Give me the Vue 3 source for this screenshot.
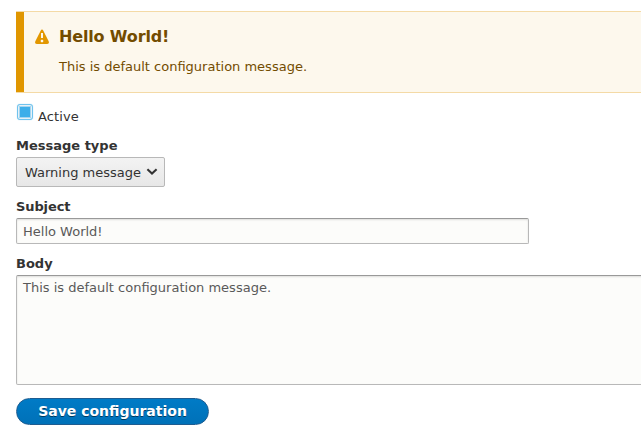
<script setup>
import { ref } from 'vue'

const active = ref(true)
const messageType = ref('Warning message')
const subject = ref('Hello World!')
const body = ref('This is default configuration message.')
</script>

<template>
  <main class="page">
    <section class="message" role="status">
      <svg class="message-icon" viewBox="0 0 16 16" aria-hidden="true">
        <path
          fill="#e29700"
          d="M14.66 12.316l-5.316-10.633c-.738-1.476-1.946-1.476-2.685 0l-5.317 10.633c-.738 1.477.008 2.684 1.658 2.684h10.002c1.65 0 2.396-1.207 1.658-2.684zm-7.66-8.316h2.002v5h-2.002v-5zm2.252 8.615c0 .344-.281.625-.625.625h-1.25c-.345 0-.626-.281-.626-.625v-1.239c0-.344.281-.625.626-.625h1.25c.344 0 .625.281.625.625v1.239z"
        />
      </svg>
      <div>
        <h2 class="message-title">{{ subject }}</h2>
        <p class="message-text">{{ body }}</p>
      </div>
    </section>

    <form class="form" @submit.prevent>
      <label class="check">
        <input v-model="active" class="check-box" type="checkbox" />
        <span class="check-text">Active</span>
      </label>

      <label class="label" for="type">Message type</label>
      <button id="type" class="select" type="button">
        <span>{{ messageType }}</span>
        <svg class="chevron" viewBox="0 0 12 8" aria-hidden="true">
          <path d="M1.4 1.3L6 5.5L10.6 1.3" fill="none" stroke="#333" stroke-width="2.1" />
        </svg>
      </button>

      <label class="label label-subject" for="subject">Subject</label>
      <input id="subject" v-model="subject" class="field subject" type="text" />

      <label class="label label-body" for="body">Body</label>
      <textarea id="body" v-model="body" class="field body" spellcheck="false"></textarea>

      <button class="save" type="submit">Save configuration</button>
    </form>
  </main>
</template>

<style>
body {
  background: #fff;
}
</style>

<style scoped>
.page {
  box-sizing: border-box;
  padding: 11px 0 0 16px;
  overflow: hidden;
  font-family: "DejaVu Sans", sans-serif;
  font-size: 13px;
  color: #333;
}

.message {
  box-sizing: border-box;
  display: flex;
  gap: 9px;
  height: 82px;
  padding: 14px 0 0 18px;
  border: solid #f4daa6;
  border-width: 1px 0;
  background: #fdf8ed;
  box-shadow: inset 8px 0 #e09600;
  color: #734c00;
}

.message-icon {
  width: 16px;
  height: 16px;
  margin-top: 3px;
}

.message-title {
  margin: 0;
  font-size: 16px;
  line-height: 21px;
  font-weight: bold;
  letter-spacing: -0.15px;
}

.message-text {
  margin: 10px 0 0;
  line-height: 20px;
}

.form {
  display: flex;
  flex-direction: column;
  align-items: flex-start;
}

.check {
  display: flex;
  gap: 5px;
  height: 33px;
  margin-top: 10px;
}

.check-box {
  appearance: none;
  box-sizing: border-box;
  display: grid;
  place-items: center;
  width: 16px;
  height: 16px;
  margin: 1px 0 0 1px;
  border: 1px solid #6fc3ee;
  border-radius: 3px;
  background: #e6f1f7;
  box-shadow: 0 0 1px #8fcdee;
}

.check-box:checked::before {
  content: "";
  width: 12px;
  height: 12px;
  border: 1px solid #a5d6f0;
  box-sizing: border-box;
  background: #3daee9;
}

.check-text {
  line-height: 20px;
  margin-top: 4px;
  letter-spacing: 0.1px;
}

.label {
  font-weight: bold;
  line-height: 20px;
}

.select {
  box-sizing: border-box;
  display: flex;
  align-items: center;
  gap: 5px;
  width: 149px;
  height: 30px;
  margin: 1px 0 0;
  padding: 0 0 0 8px;
  border: 1px solid #b8b8b8;
  border-radius: 2px;
  background: linear-gradient(#f3f3f3, #e7e7e7);
  color: #333;
  font: inherit;
  white-space: nowrap;
}

.chevron {
  flex: none;
  width: 12px;
  height: 8px;
}

.label-subject {
  margin-top: 10px;
  letter-spacing: -0.1px;
}

.field {
  box-sizing: border-box;
  margin: 1px 0 0;
  border: 1px solid #b8b8b8;
  border-top-color: #999;
  border-radius: 2px;
  background: #fcfcfa;
  box-shadow: inset 0 1px 2px rgba(0, 0, 0, 0.125);
  color: #595959;
  font: inherit;
  outline: none;
}

.subject {
  width: 513px;
  height: 26px;
  padding: 0 6px;
}

.label-body {
  margin-top: 10px;
}

.body {
  width: calc(100% + 16px);
  height: 110px;
  padding: 4px 6px;
  resize: none;
}

.save {
  box-sizing: border-box;
  width: 193px;
  height: 27px;
  margin: 13px 0 0;
  padding: 0 0 2px;
  border: 1px solid #1e5c90;
  border-radius: 20em;
  background: linear-gradient(#007bc6, #0071b8);
  color: #fff;
  font: bold 14px "DejaVu Sans", sans-serif;
  text-shadow: 0 1px rgba(0, 0, 0, 0.5);
}
</style>
